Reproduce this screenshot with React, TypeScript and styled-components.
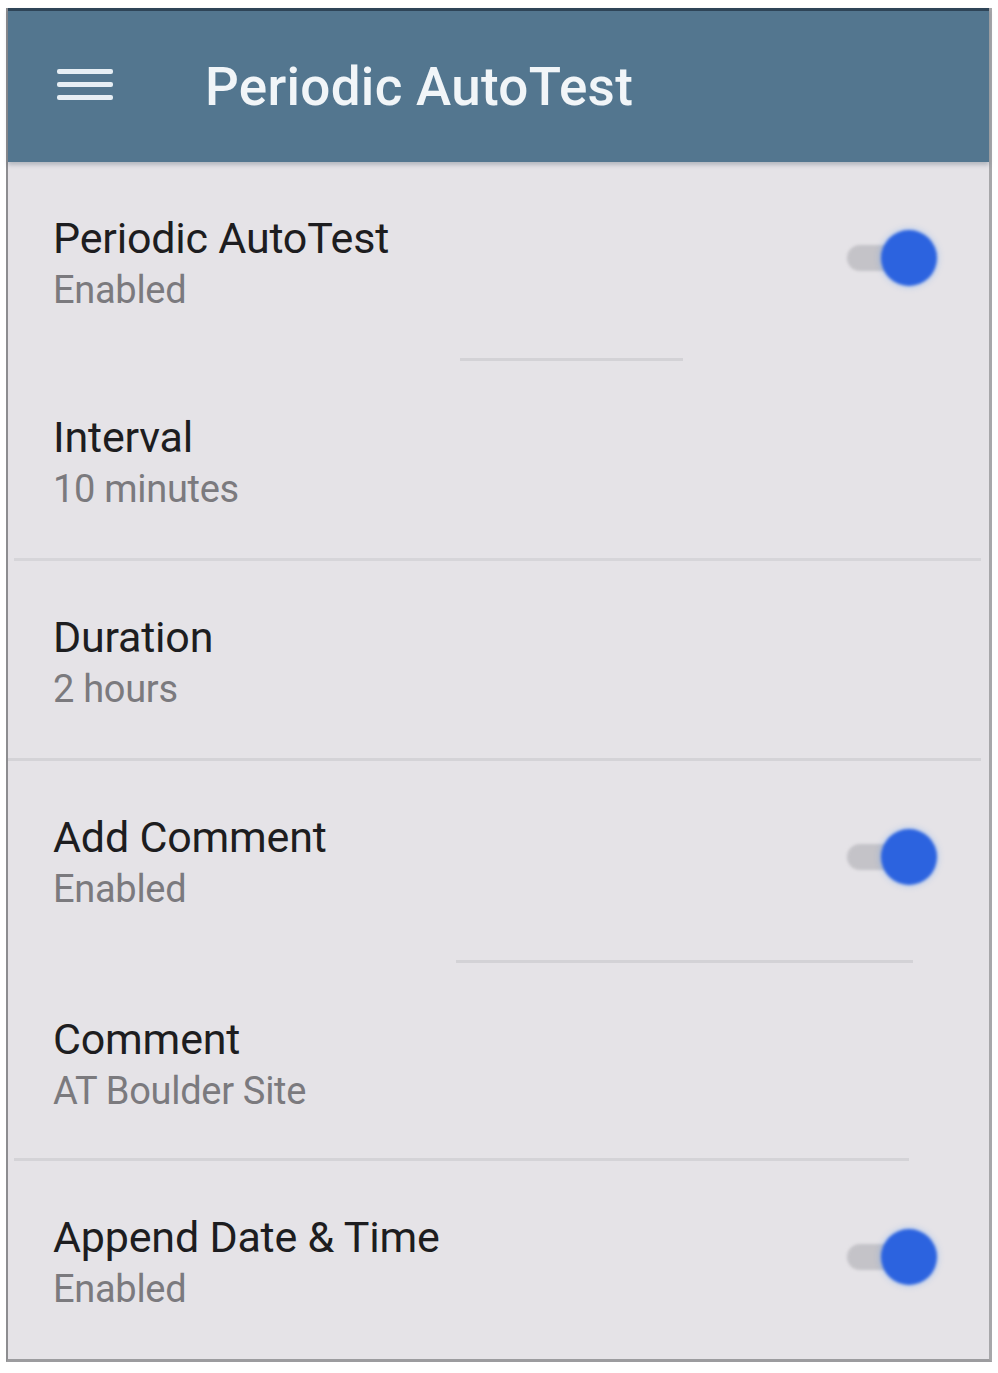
import React from 'react'
import styled, { createGlobalStyle } from 'styled-components'

const GlobalStyle = createGlobalStyle`
  html, body {
    margin: 0;
    padding: 0;
    background: #ffffff;
    font-family: Roboto, 'Noto Sans', 'Liberation Sans', sans-serif;
  }
`

const Page = styled.div`
  padding: 8px 6px 6px 6px;
`

const Screen = styled.div`
  width: 986px;
  background: #e5e3e7;
  border-left: 2px solid #8d8d90;
  border-right: 3px solid #a7a7aa;
  border-bottom: 3px solid #9c9c9f;
  box-sizing: border-box;
  display: flex;
  flex-direction: column;
`

const AppBar = styled.header`
  height: 154px;
  box-sizing: border-box;
  border-top: 3px solid #2e4457;
  background: #53768f;
  display: flex;
  align-items: center;
  padding: 0 0 0 49px;
  box-shadow: 0 3px 4px rgba(40, 60, 80, 0.25);
`

const MenuButton = styled.div`
  width: 56px;
  display: flex;
  flex-direction: column;
  gap: 8px;
  margin-right: 92px;
  margin-bottom: 4px;
  span {
    display: block;
    height: 5px;
    border-radius: 2px;
    background: #e6eef4;
  }
`

const AppTitle = styled.h1`
  margin: 0;
  font-size: 53px;
  font-weight: 500;
  color: #f1f5f8;
  letter-spacing: 0.3px;
`

const List = styled.div`
  display: flex;
  flex-direction: column;
`

const Row = styled.div<{ $height: number }>`
  height: ${p => p.$height}px;
  box-sizing: border-box;
  display: flex;
  align-items: flex-start;
  justify-content: space-between;
  padding: 50px 52px 0 45px;
`

const Divider = styled.div<{ $left: number; $right: number; $tone: string }>`
  height: 3px;
  margin: 0 ${p => p.$right}px 0 ${p => p.$left}px;
  background: ${p => p.$tone};
`

const Texts = styled.div`
  display: flex;
  flex-direction: column;
`

const Title = styled.div`
  font-size: 43px;
  line-height: 52px;
  color: #1d1d20;
  letter-spacing: -0.2px;
`

const Subtitle = styled.div`
  margin-top: 4px;
  font-size: 38px;
  line-height: 44px;
  color: #7b7a7e;
  letter-spacing: -0.3px;
`

const Switch = styled.div`
  position: relative;
  width: 90px;
  height: 56px;
  margin-top: 18px;
  display: flex;
  align-items: center;
`

const Track = styled.div`
  width: 80px;
  height: 26px;
  border-radius: 13px;
  background: #c4c3c8;
  filter: blur(1.5px);
`

const Thumb = styled.div`
  position: absolute;
  right: 0;
  top: 0;
  width: 56px;
  height: 56px;
  border-radius: 50%;
  background: #2c63df;
  box-shadow: 0 0 6px rgba(60, 140, 255, 0.45);
  filter: blur(1.5px);
`

type Setting = {
  title: string
  value: string
  toggle?: boolean
  height: number
  divider?: { left: number; right: number; tone: string }
}

const settings: Setting[] = [
  {
    title: 'Periodic AutoTest',
    value: 'Enabled',
    toggle: true,
    height: 196,
    divider: { left: 452, right: 306, tone: '#d3d2d6' }
  },
  {
    title: 'Interval',
    value: '10 minutes',
    height: 197,
    divider: { left: 6, right: 8, tone: '#d6d5d9' }
  },
  {
    title: 'Duration',
    value: '2 hours',
    height: 197,
    divider: { left: 0, right: 8, tone: '#d4d3d7' }
  },
  {
    title: 'Add Comment',
    value: 'Enabled',
    toggle: true,
    height: 199,
    divider: { left: 448, right: 76, tone: '#d3d2d6' }
  },
  {
    title: 'Comment',
    value: 'AT Boulder Site',
    height: 195,
    divider: { left: 6, right: 80, tone: '#d4d3d7' }
  },
  {
    title: 'Append Date & Time',
    value: 'Enabled',
    toggle: true,
    height: 198
  }
]

function App() {
  return (
    <Page>
      <GlobalStyle />
      <Screen>
        <AppBar>
          <MenuButton>
            <span />
            <span />
            <span />
          </MenuButton>
          <AppTitle>Periodic AutoTest</AppTitle>
        </AppBar>
        <List>
          {settings.map(s => (
            <React.Fragment key={s.title}>
              <Row $height={s.height}>
                <Texts>
                  <Title>{s.title}</Title>
                  <Subtitle>{s.value}</Subtitle>
                </Texts>
                {s.toggle && (
                  <Switch>
                    <Track />
                    <Thumb />
                  </Switch>
                )}
              </Row>
              {s.divider && (
                <Divider
                  $left={s.divider.left}
                  $right={s.divider.right}
                  $tone={s.divider.tone}
                />
              )}
            </React.Fragment>
          ))}
        </List>
      </Screen>
    </Page>
  )
}

export default App
